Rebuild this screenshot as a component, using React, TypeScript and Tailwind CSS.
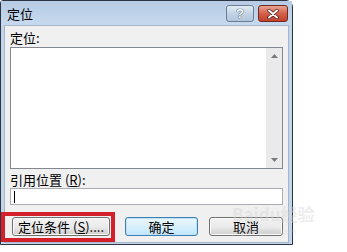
const font = { fontFamily: '"Noto Sans CJK SC", "Noto Sans", sans-serif' };

function CaptionButton({ kind }: { kind: "help" | "close" }) {
  const isClose = kind === "close";
  return (
    <div
      className={
        "flex h-[17px] items-center justify-center rounded-[3px] border " +
        (isClose
          ? "w-[30px] border-[#6d2a20] bg-gradient-to-b from-[#e9a493] via-[#d2604a] to-[#c2412c]"
          : "w-[28px] border-[#6a7d93] bg-gradient-to-b from-[#e3ecf6] via-[#c4d4e6] to-[#b2c5dc]")
      }
    >
      {isClose ? (
        <svg width="12" height="10" viewBox="0 0 12 10">
          <path d="M2 1.5 L10 8.5 M10 1.5 L2 8.5" stroke="#4a1a12" strokeWidth="3.4" strokeLinecap="round" />
          <path d="M2 1.5 L10 8.5 M10 1.5 L2 8.5" stroke="#ffffff" strokeWidth="2" strokeLinecap="round" />
        </svg>
      ) : (
        <span className="text-[13px] font-bold leading-none text-white [text-shadow:0_0_1px_#33475f,0_0_1px_#33475f]" style={{ fontFamily: '"Liberation Sans", sans-serif' }}>
          ?
        </span>
      )}
    </div>
  );
}

function Arrow({ up }: { up?: boolean }) {
  return (
    <svg width="7" height="4" viewBox="0 0 7 4">
      <path d={up ? "M0 4 L3.5 0 L7 4 Z" : "M0 0 L3.5 4 L7 0 Z"} fill="#7a7a7a" />
    </svg>
  );
}

function PushButton({ children, primary, className = "" }: { children: React.ReactNode; primary?: boolean; className?: string }) {
  return (
    <div
      className={
        "flex h-[19px] items-center justify-center rounded-[3px] border text-[13px] text-black " +
        (primary
          ? "border-[#3c7fb1] bg-gradient-to-b from-[#eaf6fd] via-[#d9f0fc] to-[#bee6fd] shadow-[inset_0_0_0_1px_#bfe2f7]"
          : "border-[#707070] bg-gradient-to-b from-[#f2f2f2] via-[#ebebeb] to-[#cfcfcf] shadow-[inset_0_0_0_1px_#fbfbfb]") +
        " " +
        className
      }
    >
      {children}
    </div>
  );
}

export default function App() {
  return (
    <div className="relative h-[252px] w-[347px] overflow-hidden bg-white" style={font}>
      <div className="flex h-[245px] w-[293px] flex-col rounded-tl-[3px] rounded-tr-[7px] border border-[#2a3442] bg-[#c2d5eb]">
        <div className="flex h-[24px] shrink-0 items-center bg-gradient-to-b from-[#b6cbe4] to-[#c7d9ee] pl-[6px] pr-[4px]">
          <span className="text-[13px] leading-none text-black">定位</span>
          <div className="ml-auto flex gap-[4px] pt-[1px]">
            <CaptionButton kind="help" />
            <CaptionButton kind="close" />
          </div>
        </div>

        <div className="mx-[3px] mb-[2px] flex flex-1 flex-col border border-[#a4b6cc] bg-[#f0f0f0] px-[5px]">
          <div className="mt-[3px] h-[17px] text-[13px] leading-[17px] text-black">定位:</div>

          <div className="mt-[1px] flex h-[122px] border border-[#828790] bg-white">
            <div className="flex-1" />
            <div className="flex w-[16px] flex-col items-center justify-between bg-[#eaeaea] py-[6px]">
              <Arrow up />
              <Arrow />
            </div>
          </div>

          <div className="mt-[3px] h-[16px] text-[13px] leading-[16px] text-black">
            引用位置 (<span className="underline">R</span>):
          </div>

          <div className="flex h-[17px] items-center border border-[#abadb3] bg-white pl-[3px]">
            <div className="h-[12px] w-px bg-black" />
          </div>

          <div className="mt-[7px] flex items-start">
            <div className="-ml-[9px] border-[4px] border-[#d3202b] pb-[2px] pl-[7px] pr-[1px] pt-[1px]">
              <PushButton className="w-[98px]">
                <span>定位条件</span>
                <span className="ml-[3px]">(<span className="underline">S</span>)....</span>
              </PushButton>
            </div>
            <PushButton primary className="ml-[10px] mt-[5px] w-[73px]">确定</PushButton>
            <PushButton className="ml-[11px] mt-[5px] w-[74px]">取消</PushButton>
          </div>
        </div>
      </div>

      <div className="pointer-events-none absolute left-[232px] top-[204px] flex flex-col items-start gap-[3px] opacity-40">
        <span className="text-[17px] font-bold leading-[20px] text-[#d4d4d4]">Baidu经验</span>
        <span className="text-[8px] leading-[9px] text-[#d0d0d0]" style={{ fontFamily: '"Liberation Sans", sans-serif' }}>
          jingyan.baidu.com
        </span>
      </div>
    </div>
  );
}
